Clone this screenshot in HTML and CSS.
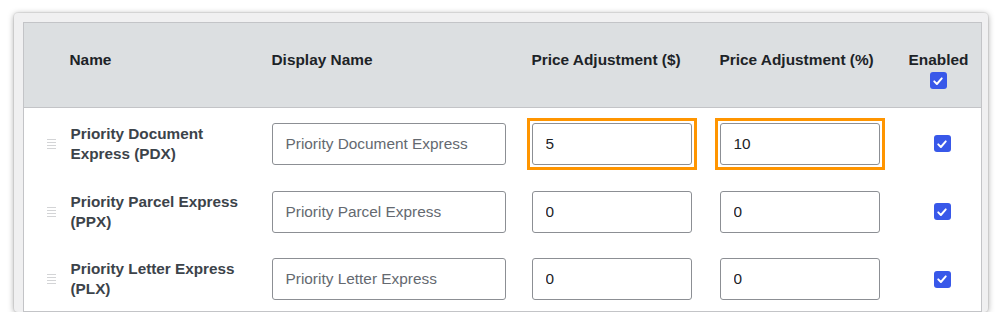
FILE: index.html
```html
<!DOCTYPE html>
<html lang="en">
<head>
    <meta charset="UTF-8">
    <title>Shipping Services</title>
    <link rel="stylesheet" href="styles.css">
</head>
<body>

    <div class="marco">
        <table class="servicios">
            <thead>
                <tr>
                    <th class="col-mover"></th>
                    <th class="col-nombre">Name</th>
                    <th class="col-display">Display Name</th>
                    <th class="col-monto">Price Adjustment ($)</th>
                    <th class="col-porcentaje">Price Adjustment (%)</th>
                    <th class="col-activo">
                        <span class="activo-titulo">
                            Enabled
                            <span class="check"><svg viewBox="0 0 16 16" width="12" height="12"><path d="M3 8.5 L6.5 12 L13 4.5" fill="none" stroke="#fff" stroke-width="2.6" stroke-linecap="round" stroke-linejoin="round"/></svg></span>
                        </span>
                    </th>
                </tr>
            </thead>
            <tbody>
                <tr>
                    <td><span class="mover"></span></td>
                    <td class="nombre">Priority Document Express (PDX)</td>
                    <td><input class="campo campo-largo" type="text" placeholder="Priority Document Express"></td>
                    <td><span class="resalte"><input class="campo" type="text" value="5"></span></td>
                    <td><span class="resalte"><input class="campo" type="text" value="10"></span></td>
                    <td><span class="check fila"><svg viewBox="0 0 16 16" width="12" height="12"><path d="M3 8.5 L6.5 12 L13 4.5" fill="none" stroke="#fff" stroke-width="2.6" stroke-linecap="round" stroke-linejoin="round"/></svg></span></td>
                </tr>
                <tr>
                    <td><span class="mover"></span></td>
                    <td class="nombre">Priority Parcel Express (PPX)</td>
                    <td><input class="campo campo-largo" type="text" placeholder="Priority Parcel Express"></td>
                    <td><input class="campo" type="text" value="0"></td>
                    <td><input class="campo" type="text" value="0"></td>
                    <td><span class="check fila"><svg viewBox="0 0 16 16" width="12" height="12"><path d="M3 8.5 L6.5 12 L13 4.5" fill="none" stroke="#fff" stroke-width="2.6" stroke-linecap="round" stroke-linejoin="round"/></svg></span></td>
                </tr>
                <tr>
                    <td><span class="mover"></span></td>
                    <td class="nombre">Priority Letter Express (PLX)</td>
                    <td><input class="campo campo-largo" type="text" placeholder="Priority Letter Express"></td>
                    <td><input class="campo" type="text" value="0"></td>
                    <td><input class="campo" type="text" value="0"></td>
                    <td><span class="check fila"><svg viewBox="0 0 16 16" width="12" height="12"><path d="M3 8.5 L6.5 12 L13 4.5" fill="none" stroke="#fff" stroke-width="2.6" stroke-linecap="round" stroke-linejoin="round"/></svg></span></td>
                </tr>
            </tbody>
        </table>
    </div>

</body>
</html>
```

FILE: styles.css
```css
body {
    margin: 0;
    background: #fff;
    font-family: "Liberation Sans", Arial, sans-serif;
}
.marco {
    margin: 13px 0 0 14px;
    width: 965px;
    height: 290px;
    padding: 9px 0 0 9px;
    background: #f0f0f1;
    border-radius: 4px;
    box-shadow: 0 1px 6px rgba(0, 0, 0, 0.35), 0 0 0 1px rgba(0, 0, 0, 0.06);
    overflow: hidden;
}
.servicios {
    width: 959px;
    border-collapse: collapse;
    table-layout: fixed;
    background: #fff;
    border: 1px solid #c3c4c7;
}
.servicios th {
    height: 85px;
    padding: 27px 0 0 0;
    box-sizing: border-box;
    vertical-align: top;
    text-align: left;
    font-size: 15.4px;
    line-height: 20px;
    font-weight: bold;
    color: #1d2327;
    background: #dcdfe1;
    border-bottom: 1px solid #c3c4c7;
}
.servicios th.col-nombre {
    padding-left: 0;
    text-indent: -1px;
}
.col-mover { width: 47px; }
.col-nombre { width: 201px; }
.col-display { width: 260px; }
.col-monto { width: 188px; }
.col-porcentaje { width: 188px; }
.servicios td {
    height: 68px;
    padding: 4px 0 0 0;
    box-sizing: border-box;
    vertical-align: middle;
}
.mover {
    display: block;
    width: 9px;
    height: 10px;
    margin-left: 23px;
    background: repeating-linear-gradient(to bottom, #d3d4d6 0, #d3d4d6 1px, transparent 1px, transparent 3px);
}
.nombre {
    font-size: 15.3px;
    line-height: 20px;
    font-weight: bold;
    color: #3c434a;
    padding-right: 18px !important;
}
.campo {
    display: block;
    box-sizing: border-box;
    width: 160px;
    height: 42px;
    padding: 0 13px;
    border: 1px solid #8c8f94;
    border-radius: 3px;
    font-family: "Liberation Sans", Arial, sans-serif;
    font-size: 15.4px;
    color: #1d2327;
    background: #fff;
}
.campo-largo {
    width: 234px;
}
.campo::placeholder {
    color: #646970;
}
.resalte {
    display: block;
    width: 160px;
    margin: -5px;
    padding: 2px;
    border: 3px solid #ff9500;
}
.activo-titulo {
    display: inline-flex;
    flex-direction: column;
    align-items: center;
    margin-left: 1px;
}
.check {
    display: flex;
    align-items: center;
    justify-content: center;
    width: 17px;
    height: 17px;
    margin-top: 2px;
    border-radius: 3px;
    background: #3858e9;
}
.check.fila {
    margin: 0 0 0 26px;
}
```
